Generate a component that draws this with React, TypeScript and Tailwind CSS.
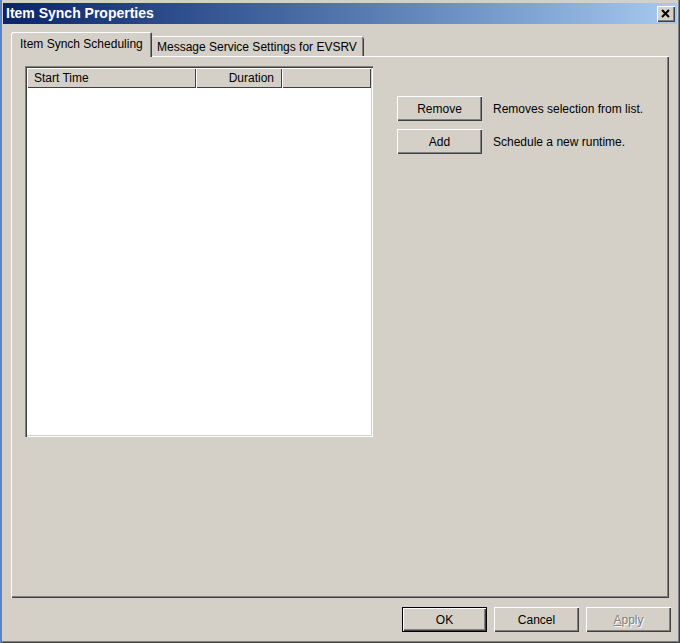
import type { ReactNode } from "react";

// Classic Win32 property sheet: title bar, two tabs, a schedule list and the OK/Cancel/Apply row.

const raised =
  "bg-[#d4d0c8] shadow-[inset_1px_1px_0_#ffffff,inset_-1px_-1px_0_#404040,inset_-2px_-2px_0_#808080]";

function Button({
  children,
  className = "",
  primary = false,
  disabled = false,
}: {
  children: ReactNode;
  className?: string;
  primary?: boolean;
  disabled?: boolean;
}) {
  const look = primary
    ? "bg-[#d4d0c8] border border-black shadow-[inset_1px_1px_0_#ffffff,inset_-1px_-1px_0_#404040,inset_-2px_-2px_0_#808080]"
    : raised;
  return (
    <button
      type="button"
      className={`flex h-[25px] w-[85px] items-center justify-center text-[12px] ${look} ${
        disabled ? "text-[#808080] [text-shadow:1px_1px_0_#ffffff]" : "text-black"
      } ${className}`}
    >
      {children}
    </button>
  );
}

function HeaderCell({ children, className = "" }: { children?: ReactNode; className?: string }) {
  return (
    <div
      className={`flex h-[20px] items-center bg-[#d4d0c8] text-[12px] shadow-[inset_1px_1px_0_#ffffff,inset_-1px_-1px_0_#404040] ${className}`}
    >
      {children}
    </div>
  );
}

export default function App() {
  return (
    <div
      className="flex h-[643px] w-[680px] flex-col bg-[#d4d0c8] text-black shadow-[inset_2px_0_0_#5b82c6,inset_-1px_-1px_0_#404040,inset_-2px_-2px_0_#808080]"
      style={{ fontFamily: '"Liberation Sans", Arial, sans-serif' }}
    >
      {/* title bar */}
      <div className="mx-[3px] mt-[3px] flex h-[21px] items-center justify-between bg-gradient-to-r from-[#0a246a] to-[#a6caf0] pl-[3px] pr-[2px]">
        <span className="text-[14px] font-bold text-white">Item Synch Properties</span>
        <button
          type="button"
          className={`flex h-[16px] w-[18px] items-center justify-center ${raised}`}
        >
          <svg width="10" height="9" viewBox="0 0 10 9">
            <path d="M1 1 L8 8 M8 1 L1 8" stroke="#000" strokeWidth="2" />
          </svg>
        </button>
      </div>

      {/* tabs */}
      <div className="flex flex-col pl-[11px] pt-[8px]">
        <div className="flex h-[24px] items-end">
          <div className="relative z-10 -mb-[1px] flex h-[25px] w-[141px] items-start rounded-t-[2px] bg-[#d4d0c8] pl-[9px] pt-[3px] text-[12px] shadow-[inset_1px_1px_0_#ffffff,inset_-1px_0_0_#404040,inset_-2px_0_0_#808080]">
            Item Synch Scheduling
          </div>
          <div className="flex h-[20px] w-[212px] items-start rounded-t-[2px] bg-[#d4d0c8] pl-[5px] pt-[2px] text-[12px] shadow-[inset_0_1px_0_#ffffff,inset_-1px_0_0_#404040,inset_-2px_0_0_#808080]">
            Message Service Settings for EVSRV
          </div>
        </div>

        {/* tab page */}
        <div className="flex h-[542px] w-[658px] gap-[24px] border-l border-t border-white bg-[#d4d0c8] pl-[13px] pt-[9px] shadow-[inset_-1px_-1px_0_#404040,inset_-2px_-2px_0_#808080]">
          <div className="flex h-[371px] w-[348px] flex-col bg-white p-[2px] shadow-[inset_1px_1px_0_#808080,inset_2px_2px_0_#404040,inset_-1px_-1px_0_#ffffff,inset_-2px_-2px_0_#d4d0c8]">
            <div className="flex">
              <HeaderCell className="w-[169px] pl-[7px]">Start Time</HeaderCell>
              <HeaderCell className="w-[86px] justify-end pr-[8px]">Duration</HeaderCell>
              <HeaderCell className="flex-1" />
            </div>
          </div>

          <div className="flex flex-col gap-[8px] pt-[30px]">
            <div className="flex items-center gap-[11px]">
              <Button>Remove</Button>
              <span className="text-[12px]">Removes selection from list.</span>
            </div>
            <div className="flex items-center gap-[11px]">
              <Button>Add</Button>
              <span className="text-[12px]">Schedule a new runtime.</span>
            </div>
          </div>
        </div>
      </div>

      {/* dialog buttons */}
      <div className="flex justify-end gap-[7px] pr-[9px] pt-[9px]">
        <Button primary>OK</Button>
        <Button>Cancel</Button>
        <Button disabled>
          <span>
            <span className="underline">A</span>pply
          </span>
        </Button>
      </div>
    </div>
  );
}
